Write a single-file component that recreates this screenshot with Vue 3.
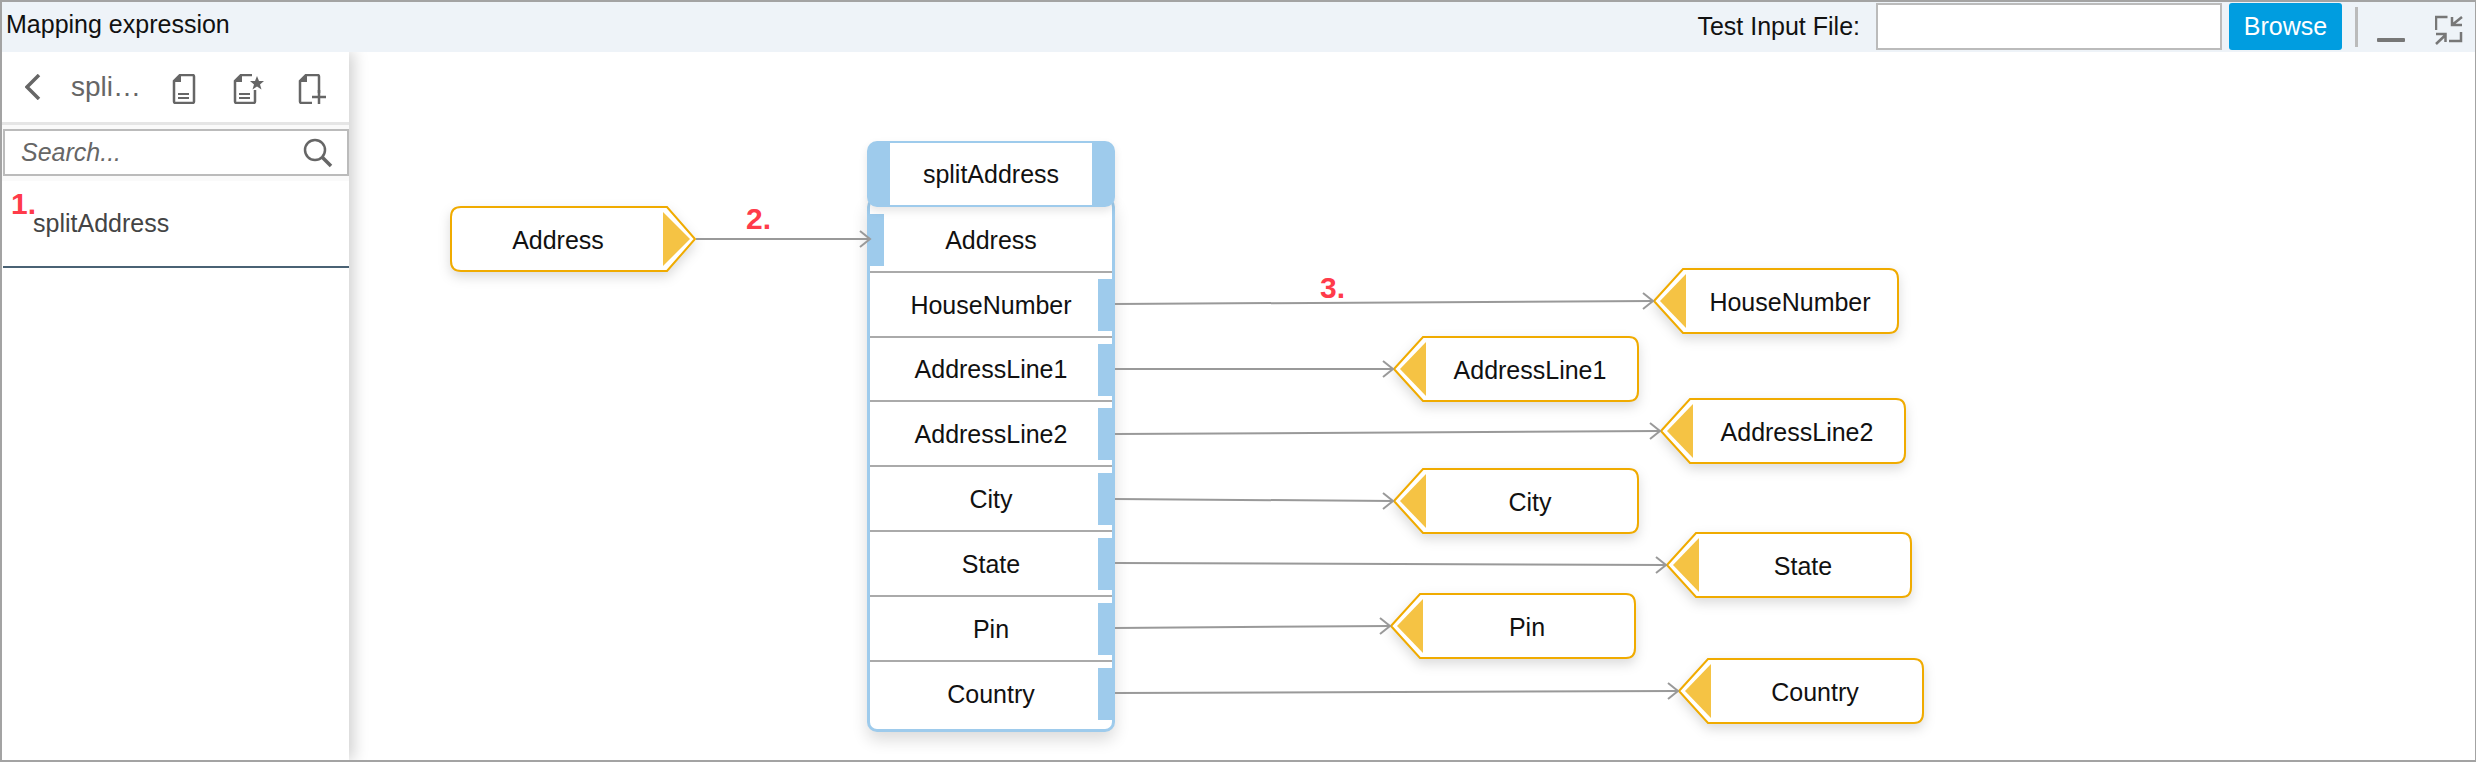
<template>
  <div class="page">
    <div class="top-bar">
      <div class="title">Mapping expression</div>
      <div class="file-label">Test Input File:</div>
      <input class="file-input" type="text" />
      <button class="browse-btn">Browse</button>
      <div class="bar-divider"></div>
      <div class="minimize"></div>
      <svg class="collapse" width="30" height="30" viewBox="0 0 30 30">
        <path d="M1 15V2H12.500M27 2L17 10M17 2V10H27M26 17V26H14M1 29L10.500 20M1 19H10.500V27" fill="none" stroke="#777" stroke-width="2.500" />
      </svg>
    </div>

    <div class="main">
      <aside class="sidebar">
        <div class="side-head">
          <svg class="back" width="16" height="26" viewBox="0 0 16 26">
            <path d="M14 1L2 13L14 25" fill="none" stroke="#666" stroke-width="3.500" />
          </svg>
          <span class="side-title">spli…</span>
          <svg class="side-icon" width="24" height="30" viewBox="0 0 24 30">
            <path d="M8 1H20.500Q22 1 22 2.500V27.500Q22 29 20.500 29H3.500Q2 29 2 27.500V7Z" fill="none" stroke="#666" stroke-width="2.500" />
            <path d="M9 1V8H2Z" fill="#666" />
            <path d="M6 20H17M6 24H17" stroke="#666" stroke-width="2" />
          </svg>
          <svg class="side-icon second" width="32" height="30" viewBox="0 0 32 30">
            <path d="M19 1H8L2 7V27.500Q2 29 3.500 29H20.500Q22 29 22 27.500V16" fill="none" stroke="#666" stroke-width="2.500" />
            <path d="M9 1V8H2Z" fill="#666" />
            <path d="M6 20H17M6 24H17" stroke="#666" stroke-width="2" />
            <path d="M24 2L26 7H31L27 10.500L28.500 15.500L24 12.500L19.500 15.500L21 10.500L17 7H22Z" fill="#666" />
          </svg>
          <svg class="side-icon third" width="30" height="30" viewBox="0 0 30 30">
            <path d="M21 19V2.500Q21 1 19.500 1H8L2 7V27.500Q2 29 3.500 29H14" fill="none" stroke="#666" stroke-width="2.500" />
            <path d="M9 1V8H2Z" fill="#666" />
            <path d="M21 16V30M14 23H28" stroke="#666" stroke-width="2.500" />
          </svg>
        </div>
        <div class="search-wrap">
          <div class="search">
            <span class="search-text">Search...</span>
            <svg width="30" height="30" viewBox="0 0 30 30">
              <circle cx="12" cy="12" r="10" fill="none" stroke="#666" stroke-width="2.500" />
              <path d="M19 19L28 28" stroke="#666" stroke-width="3.500" />
            </svg>
          </div>
        </div>
        <div class="side-item">
          <span class="note note-one">1.</span>
          splitAddress
        </div>
      </aside>

      <div class="canvas">
        <svg class="links" width="2127" height="708">
          <g v-for="(l, i) in links" :key="i" fill="none" stroke="#999" stroke-width="2">
            <path :d="`M${l.x1 - ox} ${l.y1 - oy}L${l.x2 - ox} ${l.y2 - oy}`" />
            <path :d="`M${l.x2 - ox - 10} ${l.y2 - oy - 8}L${l.x2 - ox} ${l.y2 - oy}L${l.x2 - ox - 10} ${l.y2 - oy + 8}`" />
          </g>
        </svg>

        <span class="note note-two">2.</span>
        <span class="note note-three">3.</span>

        <div class="node" :style="{ left: 450 - ox + 'px', top: 206 - oy + 'px' }">
          <svg class="node-shape" width="247" height="68" viewBox="0 0 247 68">
            <path d="M11 1H217L245 33L217 65H11Q1 65 1 55V11Q1 1 11 1Z" fill="#fff" stroke="#f0ab00" stroke-width="2" />
            <path d="M213 6L240 33L213 60Z" fill="#f5c344" />
          </svg>
          <span class="node-label output">Address</span>
        </div>

        <div class="fn">
          <div class="fn-head"><div class="fn-name">splitAddress</div></div>
          <div class="fn-body">
            <div v-for="(row, i) in rows" :key="row" class="fn-row">
              <span class="port" :class="i === 0 ? 'port-left' : 'port-right'"></span>
              {{ row }}
            </div>
          </div>
        </div>

        <div
          v-for="t in targets"
          :key="t.name"
          class="node"
          :style="{ left: t.x - ox + 'px', top: t.y - oy + 'px' }"
        >
          <svg class="node-shape" width="247" height="68" viewBox="0 0 247 68">
            <path d="M236 1H30L1 33L30 65H236Q245 65 245 55V11Q245 1 236 1Z" fill="#fff" stroke="#f0ab00" stroke-width="2" />
            <path d="M33 6L7 33L33 60Z" fill="#f5c344" />
          </svg>
          <span class="node-label input">{{ t.name }}</span>
        </div>
      </div>
    </div>
  </div>
</template>

<script setup>
const ox = 349
const oy = 52

const rows = ['Address', 'HouseNumber', 'AddressLine1', 'AddressLine2', 'City', 'State', 'Pin', 'Country']

const targets = [
  { name: 'HouseNumber', x: 1653, y: 268 },
  { name: 'AddressLine1', x: 1393, y: 336 },
  { name: 'AddressLine2', x: 1660, y: 398 },
  { name: 'City', x: 1393, y: 468 },
  { name: 'State', x: 1666, y: 532 },
  { name: 'Pin', x: 1390, y: 593 },
  { name: 'Country', x: 1678, y: 658 }
]

const links = [
  { x1: 696, y1: 239, x2: 870, y2: 239 },
  { x1: 1115, y1: 304, x2: 1653, y2: 301 },
  { x1: 1115, y1: 369, x2: 1393, y2: 369 },
  { x1: 1115, y1: 434, x2: 1660, y2: 431 },
  { x1: 1115, y1: 499, x2: 1393, y2: 501 },
  { x1: 1115, y1: 563, x2: 1666, y2: 565 },
  { x1: 1115, y1: 628, x2: 1390, y2: 626 },
  { x1: 1115, y1: 693, x2: 1678, y2: 691 }
]
</script>

<style scoped>
.page {
  box-sizing: border-box;
  width: 2476px;
  height: 762px;
  display: flex;
  flex-direction: column;
  border-style: solid;
  border-color: #a3a3a3;
  border-width: 2px 1px 2px 2px;
  background: #fff;
  font-family: "Liberation Sans", Arial, sans-serif;
  font-size: 25px;
  color: #111;
  overflow: hidden;
}

.top-bar {
  flex: none;
  height: 50px;
  display: flex;
  align-items: flex-start;
  padding-top: 1px;
  box-sizing: border-box;
  background: #eef3f8;
}

.title {
  margin-left: 4px;
  margin-right: auto;
  line-height: 42px;
}

.file-label {
  margin-right: 16px;
  line-height: 47px;
}

.file-input {
  box-sizing: border-box;
  width: 346px;
  height: 47px;
  margin: 0 7px 0 0;
  border: 2px solid #bbb;
  background: #fff;
  padding: 0;
}

.browse-btn {
  width: 113px;
  height: 47px;
  padding: 0;
  border: none;
  border-radius: 3px;
  background: #009de0;
  color: #fff;
  font: inherit;
}

.bar-divider {
  width: 3px;
  height: 40px;
  margin: 4px 0 0 13px;
  background: #bbb;
}

.minimize {
  width: 28px;
  height: 4px;
  margin: 35px 0 0 19px;
  border-radius: 1px;
  background: #777;
}

.collapse {
  margin: 12px 10px 0 30px;
}

.main {
  flex: 1;
  display: flex;
  min-height: 0;
  overflow: hidden;
}

.sidebar {
  flex: none;
  width: 347px;
  background: #fff;
  box-shadow: 5px 0 14px rgba(0, 0, 0, 0.18);
  z-index: 2;
}

.side-head {
  display: flex;
  align-items: center;
  height: 73px;
  box-sizing: border-box;
  border-bottom: 3px solid #e5e5e5;
  padding-left: 23px;
}

.side-title {
  width: 101px;
  margin-left: 30px;
  color: #666;
  font-size: 28px;
}

.side-icon {
  margin-top: 3px;
  margin-right: 37px;
}

.side-icon.second {
  margin-right: 33px;
}

.side-icon.third {
  margin-right: 0;
}

.search-wrap {
  padding: 4px 0 5px 1px;
  background: #fafafa;
}

.search {
  box-sizing: border-box;
  height: 47px;
  display: flex;
  align-items: center;
  justify-content: space-between;
  border: 2px solid #bbb;
  background: #fff;
  padding: 0 14px 0 16px;
}

.search-text {
  font-style: italic;
  color: #666;
}

.side-item {
  position: relative;
  height: 87px;
  box-sizing: border-box;
  padding: 28px 0 0 30px;
  border-bottom: 2px solid #4a6274;
  margin-left: 1px;
  color: #444;
}

.note {
  position: absolute;
  color: #ff3b4a;
  font-weight: 700;
  font-size: 30px;
  line-height: 32px;
}

.note-one {
  left: 8px;
  top: 7px;
}

.note-two {
  left: 397px;
  top: 151px;
}

.note-three {
  left: 971px;
  top: 220px;
}

.canvas {
  position: relative;
  flex: 1;
  background: #fff;
}

.links {
  position: absolute;
  left: 0;
  top: 0;
  z-index: 3;
}

.node {
  position: absolute;
  display: flex;
  align-items: center;
  width: 247px;
  height: 68px;
}

.node-shape {
  position: absolute;
  left: 0;
  top: 0;
  filter: drop-shadow(0 5px 6px rgba(0, 0, 0, 0.14));
}

.node-label {
  position: relative;
  flex: 1;
  text-align: center;
}

.node-label.input {
  padding-left: 27px;
}

.node-label.output {
  padding-right: 31px;
}

.fn {
  position: absolute;
  left: 518px;
  top: 89px;
  width: 248px;
}

.fn-head {
  position: relative;
  z-index: 1;
  height: 66px;
  box-sizing: border-box;
  padding: 2px 23px;
  border-radius: 10px;
  background: #9ecbec;
  box-shadow: 0 4px 8px rgba(0, 0, 0, 0.1);
}

.fn-name {
  height: 62px;
  line-height: 63px;
  text-align: center;
  background: #fff;
}

.fn-body {
  box-sizing: border-box;
  height: 535px;
  margin-top: -10px;
  padding-top: 11px;
  border: solid #9ecbec;
  border-width: 0 3px 3px;
  border-radius: 10px;
  background: #fff;
  box-shadow: 0 8px 16px rgba(0, 0, 0, 0.14);
}

.fn-row {
  position: relative;
  box-sizing: border-box;
  height: 64.800px;
  padding-top: 2px;
  display: flex;
  align-items: center;
  justify-content: center;
  border-bottom: 2px solid #aaa;
}

.fn-row:last-child {
  border-bottom: none;
}

.port {
  position: absolute;
  top: 6px;
  width: 17px;
  height: 52px;
  background: #9ecbec;
}

.port-left {
  left: -3px;
}

.port-right {
  right: -3px;
}
</style>
